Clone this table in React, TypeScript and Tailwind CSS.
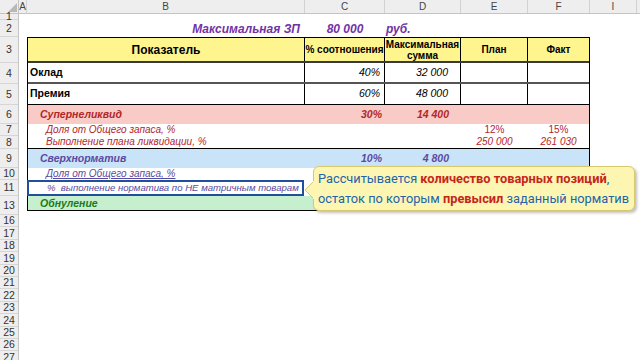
import React from "react";

const rowNums: { n: string; h: string }[] = [
  { n: "1", h: "h-[6px] text-[6px]" },
  { n: "2", h: "h-[17px]" },
  { n: "3", h: "h-[26px]" },
  { n: "4", h: "h-[21px]" },
  { n: "5", h: "h-[21px]" },
  { n: "6", h: "h-[19px]" },
  { n: "7", h: "h-[12px]" },
  { n: "8", h: "h-[13px]" },
  { n: "9", h: "h-[19px]" },
  { n: "10", h: "h-[12px]" },
  { n: "11", h: "h-[16px]" },
  { n: "13", h: "h-[19px]" },
  ...["16", "17", "18", "19", "20", "21", "22", "23", "24", "25", "26"].map((n) => ({ n, h: "h-[12.4px]" })),
];

const cols: { l: string; w: string }[] = [
  { l: "A", w: "w-[8px]" },
  { l: "B", w: "w-[278px]" },
  { l: "C", w: "w-[80px]" },
  { l: "D", w: "w-[76px]" },
  { l: "E", w: "w-[67px]" },
  { l: "F", w: "w-[62px]" },
  { l: "I", w: "w-[47px]" },
];

export default function App() {
  return (
    <div
      className="relative w-[640px] h-[360px] overflow-hidden bg-white"
      style={{ fontFamily: '"Liberation Sans", Arial, sans-serif' }}
    >
      {/* Column headers */}
      <div className="flex h-[14px] bg-[#eeeeee] border-b border-[#c4c4c4]">
        <div className="w-[19px] shrink-0 border-r border-[#c4c4c4] relative">
          <svg width="19" height="14" className="absolute left-0 top-0">
            <polygon points="17,3 17,12 8,12" fill="#b8b8b8" />
          </svg>
        </div>
        {cols.map((c) => (
          <div
            key={c.l}
            className={`${c.w} shrink-0 border-r border-[#d2d2d2] flex items-center justify-center text-[10px] leading-none text-[#444]`}
          >
            {c.l}
          </div>
        ))}
        <div className="flex-1" />
      </div>

      <div className="flex">
        {/* Row numbers */}
        <div className="w-[19px] shrink-0 flex flex-col bg-[#eeeeee] border-r border-[#c4c4c4]">
          {rowNums.map((r) => (
            <div
              key={r.n}
              className={`${r.h} shrink-0 flex items-center justify-center border-b border-[#d6d6d6] text-[10.5px] leading-none text-[#333]`}
            >
              {r.n}
            </div>
          ))}
          <div className="h-[12px] shrink-0 flex items-start justify-center pt-[1px] text-[10.5px] leading-none text-[#333]">27</div>
        </div>

        {/* Sheet */}
        <div className="flex-1 flex flex-col">
          <div className="h-[6px]" />
          {/* Row 2 title */}
          <div className="h-[17px] flex items-center text-[12px] font-bold italic text-[#7232a6] leading-none">
            <div className="w-[8px]" />
            <div className="w-[278px] text-right pr-[5px]">Максимальная ЗП</div>
            <div className="w-[80px] text-center">80 000</div>
            <div className="w-[76px] pl-[1px]">руб.</div>
          </div>

          {/* Table */}
          <div className="ml-[8px] w-[563px] border border-black flex flex-col text-black">
            {/* Row 3 */}
            <div className="h-[25px] flex bg-[#fff58f] border-b-2 border-[#3a3a3a] font-bold">
              <div className="w-[277px] border-r border-black flex items-center justify-center text-[12px]">Показатель</div>
              <div className="w-[80px] border-r border-black flex items-center justify-center text-[10px] whitespace-nowrap">% соотношения</div>
              <div className="w-[76px] border-r border-black flex items-center justify-center text-center text-[10px] leading-[11px]">
                Максимальная<br />сумма
              </div>
              <div className="w-[67px] border-r border-black flex items-center justify-center text-[10px]">План</div>
              <div className="w-[61px] flex items-center justify-center text-[10px]">Факт</div>
            </div>
            {/* Row 4 */}
            <div className="h-[21px] flex border-b-2 border-[#555] text-[10.5px]">
              <div className="w-[277px] border-r border-black flex items-center pl-[2px] font-bold">Оклад</div>
              <div className="w-[80px] border-r border-black flex items-center justify-end pr-[4px] italic">40%</div>
              <div className="w-[76px] border-r border-black flex items-center justify-end pr-[12px] italic">32 000</div>
              <div className="w-[67px] border-r border-black" />
              <div className="w-[61px]" />
            </div>
            {/* Row 5 */}
            <div className="h-[21px] flex border-b border-black text-[10.5px]">
              <div className="w-[277px] border-r border-black flex items-center pl-[2px] font-bold">Премия</div>
              <div className="w-[80px] border-r border-black flex items-center justify-end pr-[4px] italic">60%</div>
              <div className="w-[76px] border-r border-black flex items-center justify-end pr-[12px] italic">48 000</div>
              <div className="w-[67px] border-r border-black" />
              <div className="w-[61px]" />
            </div>
            {/* Row 6 */}
            <div className="h-[19px] flex bg-[#f8cbc6] text-[10.5px] font-bold italic text-[#b3262a]">
              <div className="w-[277px] flex items-center pl-[12px]">Супернеликвид</div>
              <div className="w-[80px] flex items-center justify-end pr-[3px]">30%</div>
              <div className="w-[76px] flex items-center justify-end pr-[12px]">14 400</div>
            </div>
            {/* Row 7 */}
            <div className="h-[12px] flex text-[10px] leading-none text-[#b3262a]">
              <div className="w-[277px] flex items-center pl-[18px] italic">Доля от Общего запаса, %</div>
              <div className="w-[80px]" />
              <div className="w-[76px]" />
              <div className="w-[67px] flex items-center justify-center">12%</div>
              <div className="w-[61px] flex items-center justify-center">15%</div>
            </div>
            {/* Row 8 */}
            <div className="h-[13px] flex border-b border-black text-[10px] leading-none italic text-[#b3262a]">
              <div className="w-[277px] flex items-center pl-[18px]">Выполнение плана ликвидации, %</div>
              <div className="w-[80px]" />
              <div className="w-[76px]" />
              <div className="w-[67px] flex items-center justify-center">250 000</div>
              <div className="w-[61px] flex items-center justify-center">261 030</div>
            </div>
            {/* Row 9 */}
            <div className="h-[19px] flex bg-[#c9e4f8] text-[10.5px] font-bold italic text-[#5b4aa0]">
              <div className="w-[277px] flex items-center pl-[12px]">Сверхнорматив</div>
              <div className="w-[80px] flex items-center justify-end pr-[3px]">10%</div>
              <div className="w-[76px] flex items-center justify-end pr-[12px]">4 800</div>
            </div>
            {/* Row 10 */}
            <div className="h-[12px] flex text-[10px] leading-none italic text-[#5b4aa0]">
              <div className="w-[277px] flex items-center pl-[18px]">
                <span className="underline decoration-[#5b4aa0]">Доля от Общего запаса, %</span>
              </div>
            </div>
            {/* Row 11 */}
            <div className="h-[16px] flex text-[9.6px] leading-none italic text-[#5b4aa0]">
              <div className="w-[277px] -ml-[1px] border-2 border-[#1f4f9e] flex items-center pl-[18px] whitespace-pre">
                %  выполнение норматива по НЕ матричным товарам
              </div>
            </div>
            {/* Row 13 */}
            <div className="h-[14px] flex bg-[#c6efce] text-[10.5px] leading-none font-bold italic text-[#1b7a1b]">
              <div className="w-[277px] flex items-center pl-[12px]">Обнуление</div>
            </div>
          </div>
          <div className="h-[4px]" />
        </div>
      </div>

      {/* Callout */}
      <div className="absolute left-[313px] top-[166px] w-[322px] h-[45px]">
        <svg width="12" height="20" className="absolute -left-[9px] top-[14px]">
          <polygon points="10,1 1,10 10,19" fill="#fdf6b2" stroke="#d9c96e" strokeWidth="1" />
        </svg>
        <div
          className="w-full h-full rounded-[6px] bg-[#fdf6b2] border border-[#d9c96e] shadow-[2px_2px_3px_rgba(0,0,0,0.25)] flex flex-col justify-center pl-[4px] text-[12.8px] leading-[20px] text-[#2463ab] whitespace-nowrap"
          style={{ fontFamily: '"Roboto", "Noto Sans", sans-serif' }}
        >
          <div>
            Рассчитывается <span className="font-bold text-[#c5261b]">количество товарных позиций</span>,
          </div>
          <div>
            остаток по которым <span className="font-bold text-[#c5261b]">превысил</span> заданный норматив
          </div>
        </div>
        <svg width="4" height="20" className="absolute left-[0px] top-[14px]">
          <rect x="0" y="1" width="4" height="18" fill="#fdf6b2" />
        </svg>
      </div>
    </div>
  );
}
